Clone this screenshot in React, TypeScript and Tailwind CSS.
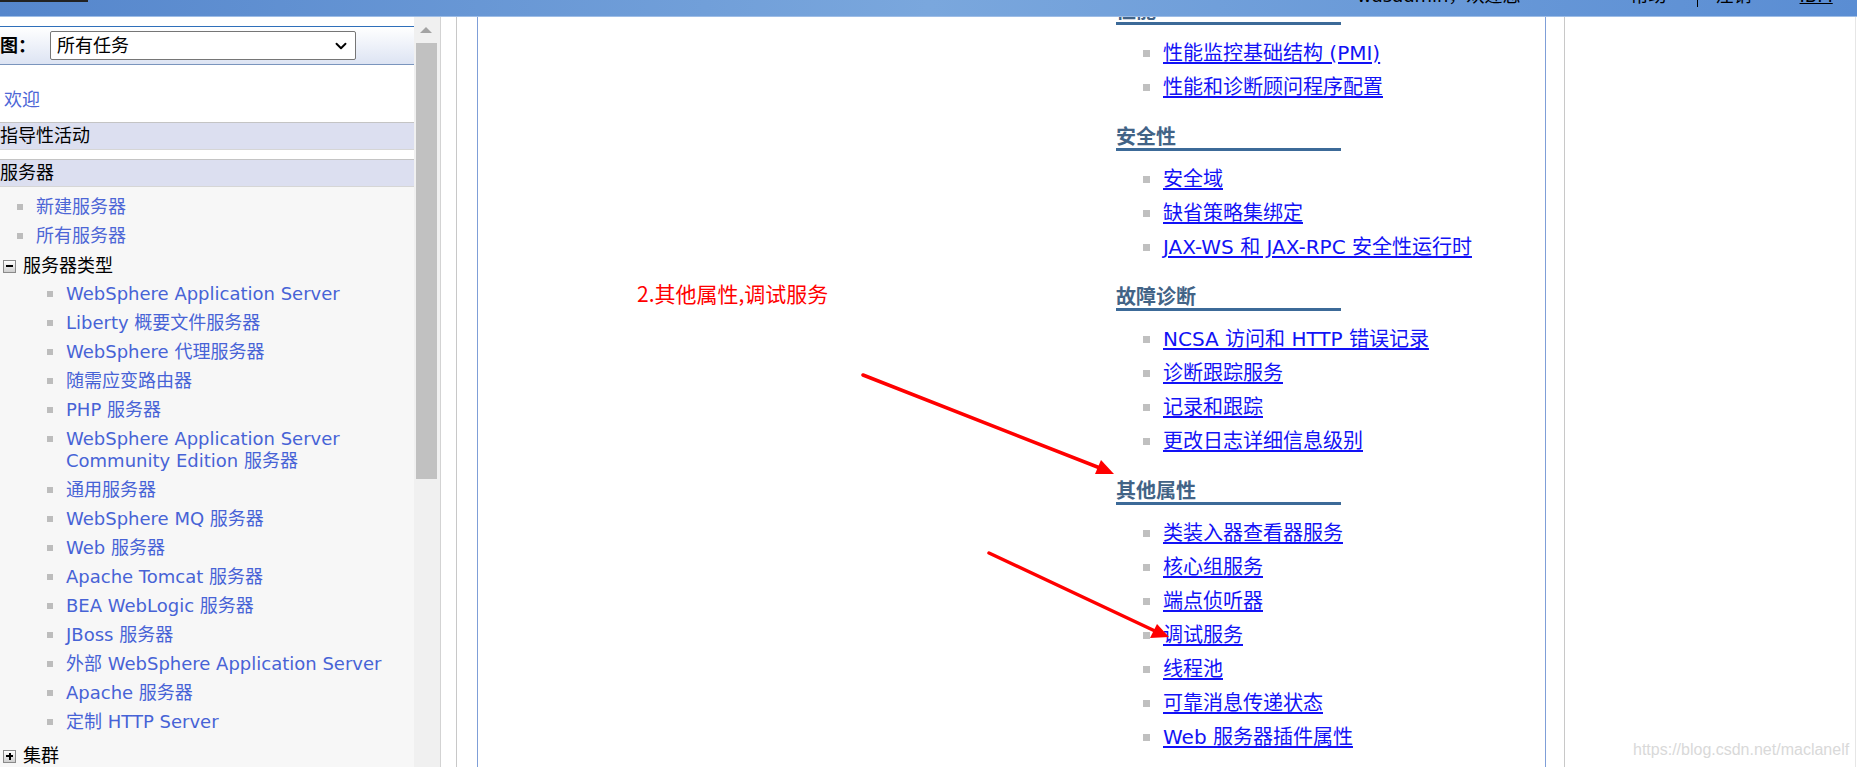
import { ChevronDown } from 'lucide-react'

const serverTypes: string[][] = [
  ['WebSphere Application Server'],
  ['Liberty 概要文件服务器'],
  ['WebSphere 代理服务器'],
  ['随需应变路由器'],
  ['PHP 服务器'],
  ['WebSphere Application Server', 'Community Edition 服务器'],
  ['通用服务器'],
  ['WebSphere MQ 服务器'],
  ['Web 服务器'],
  ['Apache Tomcat 服务器'],
  ['BEA WebLogic 服务器'],
  ['JBoss 服务器'],
  ['外部 WebSphere Application Server'],
  ['Apache 服务器'],
  ['定制 HTTP Server'],
]

const sections = [
  { title: '性能', links: ['性能监控基础结构 (PMI)', '性能和诊断顾问程序配置'] },
  { title: '安全性', links: ['安全域', '缺省策略集绑定', 'JAX-WS 和 JAX-RPC 安全性运行时'] },
  { title: '故障诊断', links: ['NCSA 访问和 HTTP 错误记录', '诊断跟踪服务', '记录和跟踪', '更改日志详细信息级别'] },
  {
    title: '其他属性',
    links: ['类装入器查看器服务', '核心组服务', '端点侦听器', '调试服务', '线程池', '可靠消息传递状态', 'Web 服务器插件属性'],
  },
]

function TreeBox({ open }: { open: boolean }) {
  return (
    <span className="relative flex h-[13px] w-[13px] items-center justify-center border border-[#8a8a8a] bg-linear-to-b from-[#ffffff] to-[#cfcfcf]">
      <span className="absolute h-[2px] w-[7px] bg-black" />
      {!open && <span className="absolute h-[7px] w-[2px] bg-black" />}
    </span>
  )
}

function LeftNav() {
  return (
    <div className="flex w-[414px] shrink-0 flex-col overflow-hidden font-['DejaVu_Sans','Noto_Sans_CJK_SC',sans-serif] text-[18px] leading-[22px]">
      <div className="h-[9px] bg-white" />
      {/* view selector */}
      <div className="flex h-[39px] items-center border-t border-b border-t-[#2f6fba] border-b-[#7a95bd] bg-linear-to-b from-white to-[#dde4f3]">
        <span className="-ml-[18px] w-[68px] shrink-0 font-bold text-black">视图：</span>
        <div className="flex h-[29px] w-[306px] items-center justify-between rounded-[2px] border border-[#767676] bg-white pl-[6px] pr-[5px] text-black">
          <span>所有任务</span>
          <ChevronDown className="h-[18px] w-[18px]" strokeWidth={2.5} />
        </div>
      </div>
      <div className="bg-white pt-[24px] pb-[11px] pl-[4px] text-[#4d66d6]">欢迎</div>
      <div className="h-[28px] border-t border-b border-t-[#c4c4c4] border-b-[#d6d6d6] bg-[#dcdff0] leading-[26px] text-black">
        指导性活动
      </div>
      <div className="h-[9px] bg-white" />
      <div className="h-[28px] border-t border-b border-t-[#c4c4c4] border-b-[#d6d6d6] bg-[#dcdff0] leading-[26px] text-black">
        服务器
      </div>
      <div className="flex-1 bg-[#f7f7f7] pt-[9px]">
        <ul className="flex flex-col gap-[7px]">
          {['新建服务器', '所有服务器'].map(t => (
            <li key={t} className="flex items-center">
              <span className="ml-[17px] mr-[13px] h-[6px] w-[6px] bg-[#bdbdbd]" />
              <span className="text-[#4d66d6]">{t}</span>
            </li>
          ))}
        </ul>
        <div className="mt-[8px] flex items-center">
          <span className="ml-[3px] mr-[7px]">
            <TreeBox open />
          </span>
          <span className="text-black">服务器类型</span>
        </div>
        <ul className="mt-[6px] flex flex-col gap-[7px]">
          {serverTypes.map((lines, i) => (
            <li key={i} className="flex items-start">
              <span className="ml-[47px] mr-[13px] mt-[8px] h-[6px] w-[6px] shrink-0 bg-[#bdbdbd]" />
              <span className="text-[#4763d6]">
                {lines.map((l, j) => (
                  <span key={j} className="block">
                    {l}
                  </span>
                ))}
              </span>
            </li>
          ))}
        </ul>
        <div className="mt-[12px] flex items-center">
          <span className="ml-[3px] mr-[7px]">
            <TreeBox open={false} />
          </span>
          <span className="text-black">集群</span>
        </div>
      </div>
    </div>
  )
}

function Scrollbar() {
  return (
    <div className="flex w-[27px] shrink-0 flex-col border-r border-[#d3d3d3] bg-[#f0f0f0]">
      <div className="flex h-[26px] items-center justify-center pr-[2px]">
        <span className="h-0 w-0 border-x-[6px] border-b-[6px] border-x-transparent border-b-[#a3a3a3]" />
      </div>
      <div className="ml-[2px] h-[436px] w-[21px] bg-[#c1c1c1]" />
    </div>
  )
}

function Content() {
  return (
    <div className="w-[1069px] shrink-0 overflow-hidden border-x border-[#7f9fd8] bg-white font-['DejaVu_Sans','Noto_Sans_CJK_SC',sans-serif]">
      <div className="-mt-[17px] pl-[638px]">
        {sections.map((s, i) => (
          <div key={s.title} className={i === 0 ? '' : 'mt-[22px]'}>
            <div className="w-[225px] border-b-[3px] border-[#3c6a98] text-[20px] font-bold leading-[22px] text-[#426386]">
              {s.title}
            </div>
            <ul className="mt-[11px]">
              {s.links.map(l => (
                <li key={l} className="flex h-[34px] items-center">
                  <span className="ml-[27px] mr-[13px] h-[7px] w-[7px] bg-[#c0c0c0]" />
                  <a className="text-[20px] leading-[24px] text-[#1212f5] underline underline-offset-[2px]">{l}</a>
                </li>
              ))}
            </ul>
          </div>
        ))}
      </div>
    </div>
  )
}

export default function App() {
  return (
    <div className="relative h-[768px] w-[1857px] overflow-hidden bg-white">
      {/* top banner, scrolled so only the bottom edge shows */}
      <div className="relative h-[17px] overflow-hidden border-b border-[#9ebde6] bg-linear-to-r from-[#5586cc] via-[#7aa7dd] to-[#5a8dd3]">
        <div className="absolute left-0 top-0 h-[2px] w-[88px] bg-[#222]" />
        <div className="-mt-[15px] flex items-center font-['DejaVu_Sans','Noto_Sans_CJK_SC',sans-serif] text-[18px] leading-[22px] text-black">
          <span className="ml-[1357px]">wasadmin，欢迎您</span>
          <span className="ml-[110px]">帮助</span>
          <span className="ml-[30px] h-[22px] w-px bg-black" />
          <span className="ml-[18px]">注销</span>
          <span className="ml-[48px] underline">IBM</span>
        </div>
      </div>

      <div className="flex h-[750px]">
        <LeftNav />
        <Scrollbar />
        <div className="w-[15px] shrink-0" />
        <div className="w-px shrink-0 bg-[#c8c8c8]" />
        <div className="w-[20px] shrink-0" />
        <Content />
        <div className="w-[18px] shrink-0" />
        <div className="w-px shrink-0 bg-[#c8c8c8]" />
        <div className="w-[290px] shrink-0" />
        <div className="w-px shrink-0 bg-[#e6e6e6]" />
      </div>

      {/* annotations drawn over the screenshot */}
      <div className="pointer-events-none absolute left-[637px] top-[279px] font-['Noto_Sans_CJK_SC',sans-serif] text-[21px] leading-[28px] text-[#ff0000]">
        2.其他属性,调试服务
      </div>
      <svg className="pointer-events-none absolute left-0 top-0" width="1857" height="768">
        <line x1="863" y1="375" x2="1100" y2="468" stroke="#ff0000" strokeWidth="3.5" strokeLinecap="round" />
        <polygon points="1114,474 1095,474 1101,460" fill="#ff0000" />
        <line x1="989" y1="553" x2="1155" y2="631" stroke="#ff0000" strokeWidth="3.5" strokeLinecap="round" />
        <polygon points="1169,637 1150,638 1157,624" fill="#ff0000" />
      </svg>
      <div className="pointer-events-none absolute left-[1633px] top-[740px] font-['Liberation_Sans',Arial,sans-serif] text-[16px] leading-[20px] text-[#d9d9d9]">
        https://blog.csdn.net/maclanelf
      </div>
    </div>
  )
}
